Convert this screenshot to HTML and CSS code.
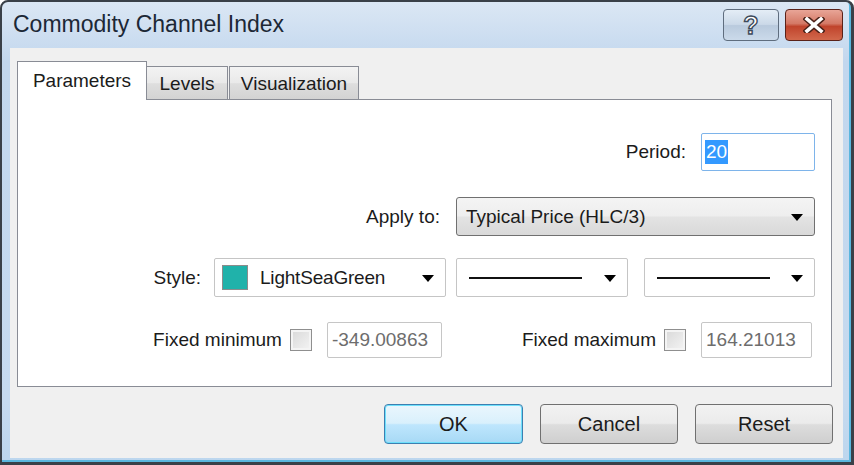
FILE: index.html
```html
<!DOCTYPE html>
<html lang="en">
<head>
    <meta charset="UTF-8">
    <title>Commodity Channel Index</title>
    <link rel="stylesheet" href="styles.css">
</head>
<body>
<div class="window">
    <div class="titlebar">
        <span class="title">Commodity Channel Index</span>
        <div class="caption">
            <div class="cap help">?</div>
            <div class="cap close">
                <svg width="22" height="16" viewBox="0 0 22 16">
                    <path d="M4 2 L18 14 M18 2 L4 14" stroke="#4a2118" stroke-width="6.5" stroke-linecap="square"/>
                    <path d="M4 2 L18 14 M18 2 L4 14" stroke="#fff" stroke-width="3.6" stroke-linecap="square"/>
                </svg>
            </div>
        </div>
    </div>
    <div class="client">
        <div class="tabs">
            <div class="tab active">Parameters</div>
            <div class="tab levels">Levels</div>
            <div class="tab vis">Visualization</div>
        </div>
        <div class="panel">
            <div class="row r1">
                <span class="lbl">Period:</span>
                <div class="edit focus"><span class="sel">20</span></div>
            </div>
            <div class="row r2">
                <span class="lbl">Apply to:</span>
                <div class="combo btn-combo">
                    <span>Typical Price (HLC/3)</span>
                    <svg class="arrow" width="12" height="7" viewBox="0 0 12 7"><path d="M0 0 H12 L6 7 Z"/></svg>
                </div>
            </div>
            <div class="row r3">
                <span class="lbl">Style:</span>
                <div class="combo color">
                    <span class="swatch"></span>
                    <span class="cname">LightSeaGreen</span>
                    <svg class="arrow" width="12" height="7" viewBox="0 0 12 7"><path d="M0 0 H12 L6 7 Z"/></svg>
                </div>
                <div class="combo line">
                    <span class="stroke"></span>
                    <svg class="arrow" width="12" height="7" viewBox="0 0 12 7"><path d="M0 0 H12 L6 7 Z"/></svg>
                </div>
                <div class="combo line">
                    <span class="stroke"></span>
                    <svg class="arrow" width="12" height="7" viewBox="0 0 12 7"><path d="M0 0 H12 L6 7 Z"/></svg>
                </div>
            </div>
            <div class="row r4">
                <span class="lbl">Fixed minimum</span>
                <span class="check"></span>
                <div class="edit off w-min">-349.00863</div>
                <span class="lbl gap">Fixed maximum</span>
                <span class="check"></span>
                <div class="edit off w-max">164.21013</div>
            </div>
        </div>
        <div class="buttons">
            <div class="btn ok">OK</div>
            <div class="btn">Cancel</div>
            <div class="btn">Reset</div>
        </div>
    </div>
</div>
</body>
</html>
```

FILE: styles.css
```css
*{margin: 0;padding: 0;box-sizing: border-box;}

body{
    background: #fff;
    font-family: "Liberation Sans", Arial, sans-serif;
    color: #1b1b1b;
}

.window{
    width: 854px;
    height: 465px;
    border: 2px solid #3a4048;
    border-width: 2px 3px 3px 2px;
    border-radius: 8px 8px 0 0;
    background: linear-gradient(#dbe7f4, #c2d7ee 60px, #c6daef 400px, #bcd6ee);
    padding: 0 8px 4px 8px;
    display: flex;
    flex-direction: column;
    box-shadow: inset -2px -2px 0 #5ab6de;
}

/* title bar */
.titlebar{
    height: 46px;
    display: flex;
    justify-content: space-between;
    align-items: flex-start;
}
.title{
    font-size: 23px;
    color: #1c2836;
    margin: 9px 0 0 3px;
}
.caption{
    display: flex;
    gap: 6px;
    margin-top: 7px;
}
.cap{
    height: 32px;
    border: 1px solid #5f6d7e;
    border-radius: 4px;
    display: flex;
    align-items: center;
    justify-content: center;
}
.help{
    width: 56px;
    background: linear-gradient(#e4edf6, #cbd9e8 48%, #b9cadd 52%, #cbdaea);
    font-weight: bold;
    font-size: 25px;
    color: #fff;
    -webkit-text-stroke: 1.4px #3d4a5a;
    padding-top: 1px;
}
.close{
    width: 58px;
    border-color: #5a2219;
    background: linear-gradient(#e8a597, #d47966 45%, #c0442c 55%, #d2684c);
}

/* client area */
.client{
    flex: 1;
    background: #f0f0f0;
    padding-top: 13px;
    display: flex;
    flex-direction: column;
}

.tabs{
    display: flex;
    align-items: flex-end;
    height: 38px;
    margin-left: 7px;
}
.tab{
    height: 33px;
    border: 1px solid #898c95;
    border-bottom: 0;
    background: linear-gradient(#f3f3f3, #e9e9e9 50%, #dedede 52%, #d3d3d3);
    font-size: 19px;
    text-align: center;
    padding-top: 6px;
}
.tab.active{
    height: 39px;
    width: 130px;
    background: #fff;
    margin-bottom: -1px;
    position: relative;
    z-index: 1;
    padding-top: 8px;
}
.tab.levels{
    width: 81px;
    border-left: 0;
}
.tab.vis{
    width: 130px;
    margin-left: 1px;
}

.panel{
    height: 288px;
    margin: 0 11px 0 7px;
    border: 1px solid #898c95;
    background: #fff;
    padding: 33px 16px 0 0;
    display: flex;
    flex-direction: column;
    align-items: flex-end;
}

.row{
    display: flex;
    align-items: center;
}
.lbl{
    font-size: 19px;
}
.r1 .lbl{margin-right: 15px;}
.r2{margin-top: 26px;}
.r2 .lbl{margin-right: 16px;}
.r3{margin-top: 22px;}
.r3 .lbl{margin-right: 13px;}
.r4{margin-top: 25px; margin-right: 3px;}

.edit{
    height: 38px;
    border: 1px solid #abadb3;
    border-radius: 2px;
    background: #fff;
    font-size: 19px;
    display: flex;
    align-items: center;
}
.edit.focus{
    width: 114px;
    border-color: #7eb4ea;
    padding-left: 3px;
}
.sel{
    background: #3399ff;
    color: #fff;
    padding: 1px 1px;
}
.edit.off{
    height: 36px;
    border-color: #c6c6c6;
    color: #6d6d6d;
    padding-left: 4px;
}
.w-min{width: 115px;}
.w-max{width: 111px;}

.combo{
    height: 39px;
    border: 1px solid #c5c5c5;
    border-radius: 2px;
    background: #fff;
    display: flex;
    align-items: center;
    font-size: 19px;
    position: relative;
}
.combo .arrow{
    position: absolute;
    right: 11px;
    top: 16px;
}
.btn-combo{
    width: 359px;
    border-color: #707070;
    border-radius: 3px;
    background: linear-gradient(#f4f4f4, #eeeeee 48%, #e3e3e3 52%, #d9d9d9);
    padding-left: 9px;
}
.color{
    width: 232px;
    padding-left: 7px;
}
.swatch{
    width: 26px;
    height: 25px;
    background: #20b2aa;
    border: 1px solid #8c8c8c;
    margin-right: 12px;
}
.cname{letter-spacing: -0.2px;}
.line{
    width: 172px;
    margin-left: 10px;
    padding-left: 12px;
}
.line + .line{margin-left: 16px; width: 171px;}
.stroke{
    width: 113px;
    height: 2px;
    background: #111;
}

.check{
    width: 22px;
    height: 22px;
    border: 1px solid #8f8f8f;
    background: linear-gradient(135deg, #d8d8d8, #f4f4f4);
    box-shadow: inset 0 0 0 2px #f4f4f4;
    margin: 0 15px 0 8px;
}
.gap{margin-left: 80px;}

/* bottom buttons */
.buttons{
    display: flex;
    justify-content: flex-end;
    gap: 17px;
    margin-top: 17px;
    padding-right: 10px;
}
.btn{
    width: 138px;
    height: 40px;
    border: 1px solid #707070;
    border-radius: 4px;
    background: linear-gradient(#f2f2f2, #ebebeb 48%, #dddddd 52%, #cfcfcf);
    font-size: 20px;
    display: flex;
    align-items: center;
    justify-content: center;
}
.btn.ok{
    width: 139px;
    border-color: #3c7fb1;
    background: linear-gradient(#eaf6fd, #d9f0fc 48%, #bee6fd 52%, #a7d9f5);
    box-shadow: inset 0 0 0 1px #6ee0fb;
}
```
